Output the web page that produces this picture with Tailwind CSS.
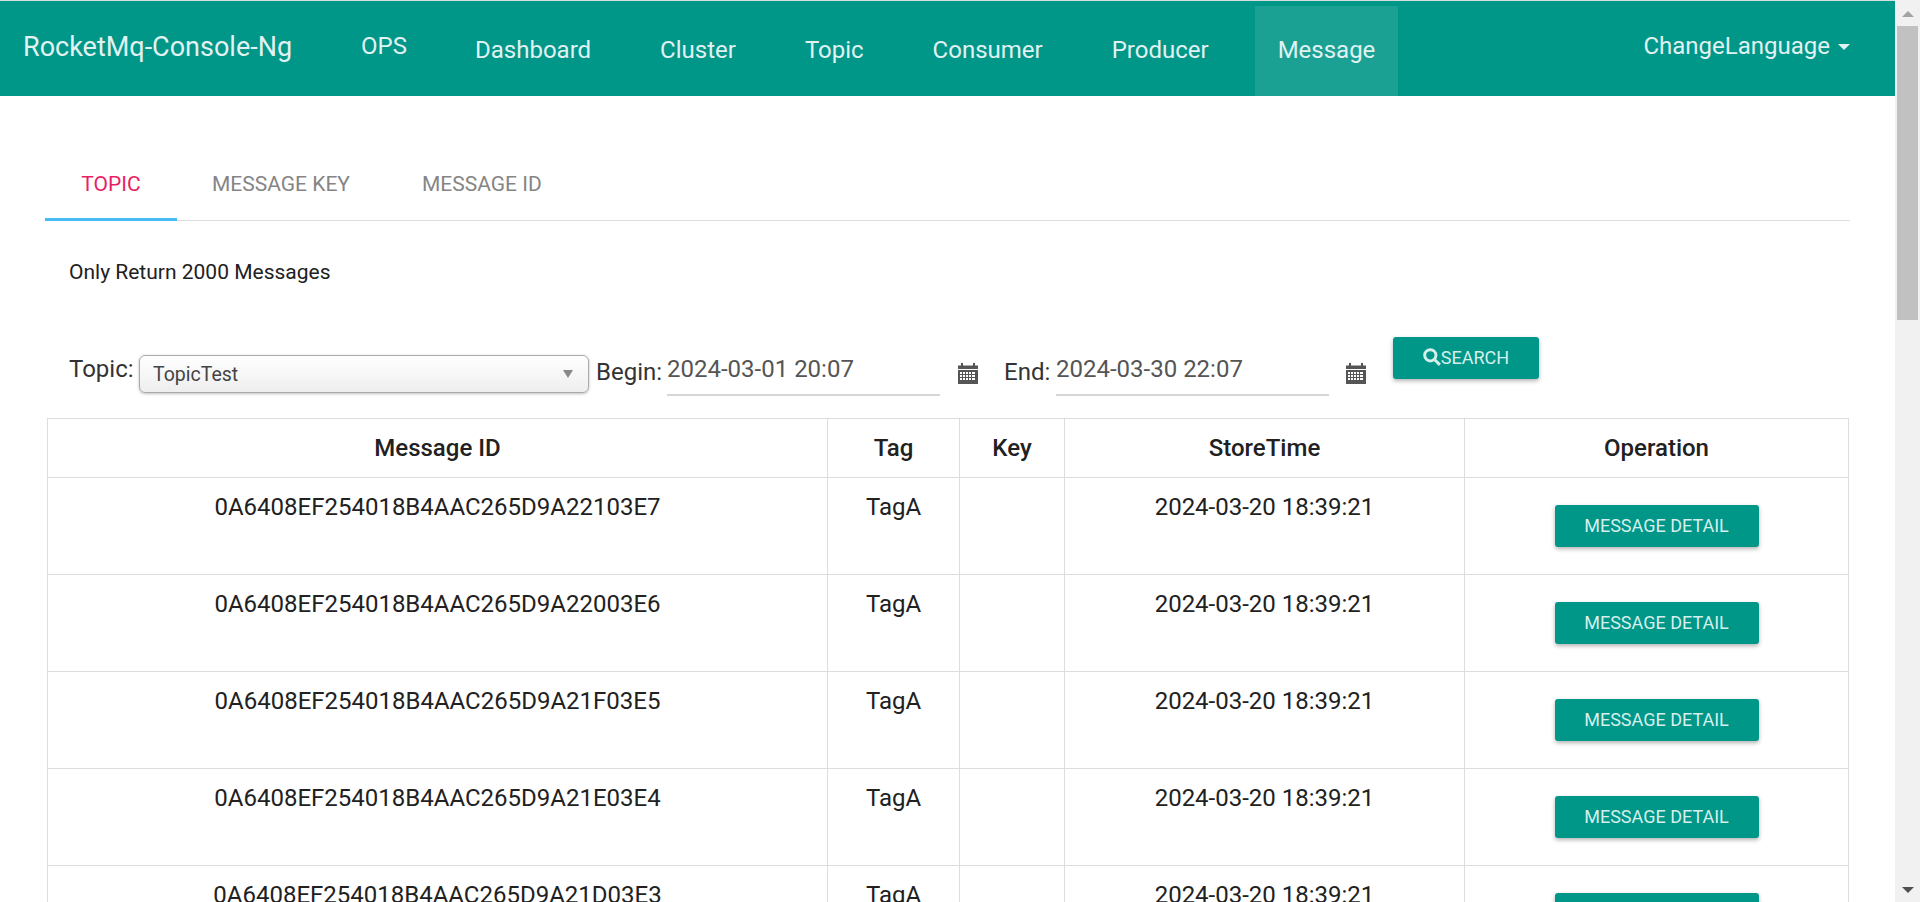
<!DOCTYPE html>
<html lang="en">
<head>
    <meta charset="UTF-8">
    <title>RocketMq-Console-Ng</title>
    <script src="https://cdn.jsdelivr.net/npm/@tailwindcss/browser@4"></script>
</head>
<body class="h-screen overflow-hidden bg-white font-['Roboto',sans-serif] text-[#212121]">
    <div class="flex h-[902px] overflow-hidden">
        <div class="w-[1895px] shrink-0 overflow-hidden">
            <!-- Navigation -->
            <nav class="h-[96px] bg-[#009688] border-t border-[#d5dedc] flex text-[24px] leading-[28px] text-[#e0f2f1]">
                <a href="#" class="ml-[23px] mt-[31px] text-[27px] leading-[30px] w-[315px]">RocketMq-Console-Ng</a>
                <a href="#" class="w-[114px] pl-[23px] mt-[31px]">OPS</a>
                <div class="flex gap-[23px] mt-[5px]">
                    <a href="#" class="h-[90px] px-[23px] pt-[30px]">Dashboard</a>
                    <a href="#" class="h-[90px] px-[23px] pt-[30px]">Cluster</a>
                    <a href="#" class="h-[90px] px-[23px] pt-[30px]">Topic</a>
                    <a href="#" class="h-[90px] px-[23px] pt-[30px]">Consumer</a>
                    <a href="#" class="h-[90px] px-[23px] pt-[30px]">Producer</a>
                    <a href="#" class="h-[90px] px-[23px] pt-[30px] bg-white/10">Message</a>
                </div>
                <a href="#" class="ml-auto mr-[45px] mt-[31px] flex items-center h-[28px]">
                    ChangeLanguage
                    <span class="ml-[8px] mt-[2px] border-x-[6px] border-t-[6px] border-x-transparent border-t-[#e0f2f1]"></span>
                </a>
            </nav>

            <div class="pl-[45px] pr-[45px]">
                <!-- Tabs -->
                <div class="mt-[50px] flex h-[75px] border-b border-[#ddd] text-[21px] text-[#858585]">
                    <a href="#" class="w-[132px] h-[75px] pt-[25px] text-center leading-[26px] text-[#e91e63] border-b-[3px] border-[#45baf5]">TOPIC</a>
                    <a href="#" class="ml-[35px] pt-[25px] leading-[26px]">MESSAGE KEY</a>
                    <a href="#" class="ml-[72px] pt-[25px] leading-[26px]">MESSAGE ID</a>
                </div>

                <p class="mt-[39px] ml-[24px] text-[21px] leading-[24px] h-[24px]">Only Return 2000 Messages</p>

                <!-- Search form -->
                <div class="relative mt-[53px] ml-[3px] h-[81px] flex text-[#333]">
                    <label class="ml-[21px] mt-[18px] w-[70px] text-[24px] leading-[28px]">Topic:</label>
                    <div class="mt-[18px] w-[450px] h-[38px] rounded-[6px] border border-[#aaa] bg-linear-to-b from-white to-[#eee] shadow-[0_1px_3px_rgba(0,0,0,0.25)] flex items-center pl-[13px] pr-[15px] text-[19.5px] text-[#444]">
                        <span class="mt-[1px]">TopicTest</span>
                        <span class="ml-auto border-x-[5px] border-t-[8px] border-x-transparent border-t-[#888]"></span>
                    </div>
                    <label class="ml-[7px] mt-[21px] w-[71px] text-[24px] leading-[28px]">Begin:</label>
                    <div class="mt-[9px] w-[273px] h-[50px] border-b-2 border-[#d6d6d6] text-[24px] leading-[28px] text-[#555] pt-[9px]">2024-03-01 20:07</div>
                    <svg class="ml-[18px] mt-[26px] w-[20px] h-[21px]" viewBox="0 0 20 21" fill="#555">
                        <rect x="3" y="0" width="2" height="3"/><rect x="15" y="0" width="2" height="3"/>
                        <path d="M0 2.5h20V6H0z"/>
                        <path fill-rule="evenodd" d="M0 7h20v14H0zM2 9v2h2V9zm3 0v2h2V9zm3 0v2h2V9zm3 0v2h2V9zm3 0v2h3V9zM2 12v2h2v-2zm3 0v2h2v-2zm3 0v2h2v-2zm3 0v2h2v-2zm3 0v2h3v-2zM2 15v2h2v-2zm3 0v2h2v-2zm3 0v2h2v-2zm3 0v2h2v-2zm3 0v2h3v-2z"/>
                    </svg>
                    <label class="ml-[26px] mt-[21px] w-[52px] text-[24px] leading-[28px]">End:</label>
                    <div class="mt-[9px] w-[273px] h-[50px] border-b-2 border-[#d6d6d6] text-[24px] leading-[28px] text-[#555] pt-[9px]">2024-03-30 22:07</div>
                    <svg class="ml-[17px] mt-[26px] w-[20px] h-[21px]" viewBox="0 0 20 21" fill="#555">
                        <rect x="3" y="0" width="2" height="3"/><rect x="15" y="0" width="2" height="3"/>
                        <path d="M0 2.5h20V6H0z"/>
                        <path fill-rule="evenodd" d="M0 7h20v14H0zM2 9v2h2V9zm3 0v2h2V9zm3 0v2h2V9zm3 0v2h2V9zm3 0v2h3V9zM2 12v2h2v-2zm3 0v2h2v-2zm3 0v2h2v-2zm3 0v2h2v-2zm3 0v2h3v-2zM2 15v2h2v-2zm3 0v2h2v-2zm3 0v2h2v-2zm3 0v2h2v-2zm3 0v2h3v-2z"/>
                    </svg>
                    <button class="ml-[27px] w-[146px] h-[42px] pb-[2px] rounded-[3px] bg-[#009688] text-[#d5efec] text-[18px] flex items-center justify-center shadow-[0_2px_4px_rgba(0,0,0,0.3)]">
                        <svg class="w-[18px] h-[18px]" viewBox="0 0 16 16" fill="none" stroke="#d5efec" stroke-width="2.6"><circle cx="6.5" cy="6.5" r="5"/><path d="M10.2 10.2L15 15"/></svg>
                        SEARCH
                    </button>
                </div>

                <!-- Messages table -->
                <table class="ml-[2px] w-[1801px] table-fixed border-collapse text-[24px] leading-[30px] text-center">
                    <colgroup>
                        <col class="w-[780px]"><col class="w-[132px]"><col class="w-[105px]"><col class="w-[400px]"><col class="w-[384px]">
                    </colgroup>
                    <thead>
                        <tr class="h-[59px]">
                            <th class="border border-[#ddd] font-medium">Message ID</th>
                            <th class="border border-[#ddd] font-medium">Tag</th>
                            <th class="border border-[#ddd] font-medium">Key</th>
                            <th class="border border-[#ddd] font-medium">StoreTime</th>
                            <th class="border border-[#ddd] font-medium">Operation</th>
                        </tr>
                    </thead>
                    <tbody>
                        <tr class="h-[97px] align-top">
                            <td class="border border-[#ddd] pt-[14px]">0A6408EF254018B4AAC265D9A22103E7</td>
                            <td class="border border-[#ddd] pt-[14px]">TagA</td>
                            <td class="border border-[#ddd]"></td>
                            <td class="border border-[#ddd] pt-[14px]">2024-03-20 18:39:21</td>
                            <td class="border border-[#ddd] pt-[27px]"><button class="w-[204px] h-[42px] rounded-[3px] bg-[#009688] text-[#d5efec] text-[18px] shadow-[0_2px_4px_rgba(0,0,0,0.3)]">MESSAGE DETAIL</button></td>
                        </tr>
                        <tr class="h-[97px] align-top">
                            <td class="border border-[#ddd] pt-[14px]">0A6408EF254018B4AAC265D9A22003E6</td>
                            <td class="border border-[#ddd] pt-[14px]">TagA</td>
                            <td class="border border-[#ddd]"></td>
                            <td class="border border-[#ddd] pt-[14px]">2024-03-20 18:39:21</td>
                            <td class="border border-[#ddd] pt-[27px]"><button class="w-[204px] h-[42px] rounded-[3px] bg-[#009688] text-[#d5efec] text-[18px] shadow-[0_2px_4px_rgba(0,0,0,0.3)]">MESSAGE DETAIL</button></td>
                        </tr>
                        <tr class="h-[97px] align-top">
                            <td class="border border-[#ddd] pt-[14px]">0A6408EF254018B4AAC265D9A21F03E5</td>
                            <td class="border border-[#ddd] pt-[14px]">TagA</td>
                            <td class="border border-[#ddd]"></td>
                            <td class="border border-[#ddd] pt-[14px]">2024-03-20 18:39:21</td>
                            <td class="border border-[#ddd] pt-[27px]"><button class="w-[204px] h-[42px] rounded-[3px] bg-[#009688] text-[#d5efec] text-[18px] shadow-[0_2px_4px_rgba(0,0,0,0.3)]">MESSAGE DETAIL</button></td>
                        </tr>
                        <tr class="h-[97px] align-top">
                            <td class="border border-[#ddd] pt-[14px]">0A6408EF254018B4AAC265D9A21E03E4</td>
                            <td class="border border-[#ddd] pt-[14px]">TagA</td>
                            <td class="border border-[#ddd]"></td>
                            <td class="border border-[#ddd] pt-[14px]">2024-03-20 18:39:21</td>
                            <td class="border border-[#ddd] pt-[27px]"><button class="w-[204px] h-[42px] rounded-[3px] bg-[#009688] text-[#d5efec] text-[18px] shadow-[0_2px_4px_rgba(0,0,0,0.3)]">MESSAGE DETAIL</button></td>
                        </tr>
                        <tr class="h-[97px] align-top">
                            <td class="border border-[#ddd] pt-[14px]">0A6408EF254018B4AAC265D9A21D03E3</td>
                            <td class="border border-[#ddd] pt-[14px]">TagA</td>
                            <td class="border border-[#ddd]"></td>
                            <td class="border border-[#ddd] pt-[14px]">2024-03-20 18:39:21</td>
                            <td class="border border-[#ddd] pt-[27px]"><button class="w-[204px] h-[42px] rounded-[3px] bg-[#009688] text-[#d5efec] text-[18px] shadow-[0_2px_4px_rgba(0,0,0,0.3)]">MESSAGE DETAIL</button></td>
                        </tr>
                    </tbody>
                </table>
            </div>
        </div>

        <!-- Scrollbar -->
        <div class="w-[25px] shrink-0 bg-[#f1f1f1] flex flex-col items-center">
            <span class="mt-[11px] border-x-[6px] border-b-[6px] border-x-transparent border-b-[#a3a3a3]"></span>
            <div class="mt-[9px] w-[21px] h-[294px] bg-[#c1c1c1]"></div>
            <span class="mt-auto mb-[9px] border-x-[6px] border-t-[6px] border-x-transparent border-t-[#505050]"></span>
        </div>
    </div>
</body>
</html>
